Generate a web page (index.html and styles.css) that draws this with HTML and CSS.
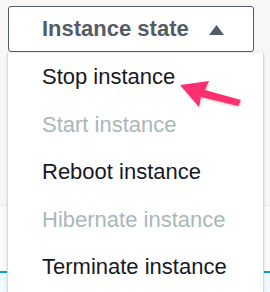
FILE: index.html
```html
<!DOCTYPE html>
<html lang="en">
<head>
<meta charset="UTF-8" />
<title>Instance state</title>
<link rel="stylesheet" href="styles.css">
</head>
<body>

<div class="page">
  <div class="toolbar">
    <button class="state-btn">
      <span>Instance state</span>
      <svg class="caret" width="15" height="10" viewBox="0 0 15 10"><polygon points="7.5,0 15,10 0,10" fill="#545b64"/></svg>
    </button>
  </div>

  <!-- table rows behind the dropdown -->
  <div class="rows">
    <div class="row"></div>
    <div class="row"></div>
    <div class="row selected"></div>
  </div>

  <ul class="menu">
    <li class="menu-item">Stop instance</li>
    <li class="menu-item disabled">Start instance</li>
    <li class="menu-item">Reboot instance</li>
    <li class="menu-item disabled">Hibernate instance</li>
    <li class="menu-item">Terminate instance</li>
  </ul>

  <svg class="pointer" width="68" height="32" viewBox="0 0 68 32">
    <polygon points="4,7 33,3 29,12 65,22 62,28 25,19 23,29" fill="#fe2f6e"/>
  </svg>
</div>

</body>
</html>
```

FILE: styles.css
```css
body {
  margin:0; background:#f7f7f7;
  font-family:'Liberation Sans', Arial, sans-serif;
  overflow:hidden;
}

.page {
  position:relative;
  height:292px;
  overflow:hidden;
}

.toolbar {
  padding:6px 16px 0 8px;
}
.state-btn {
  display:flex; align-items:center; gap:19px;
  width:246px; height:46px; box-sizing:border-box;
  padding:0 0 0 33px;
  background:#fff; border:1px solid #545b64; border-radius:3px;
  font-family:'Liberation Sans', Arial, sans-serif;
  font-size:22px; font-weight:700; color:#545b64;
}
.caret { margin-top:1px; margin-left:1px; }

/* rows of the table under the menu */
.rows { margin-top:1px; }
.row { height:152px; border-bottom:1px solid #eaeded; background:#f7f7f7; }
.row + .row { height:65px; background:#fafafa; border-bottom:2px solid #0a9fca; }
.row.selected { height:19px; background:#f1faff; border:none; }

/* dropdown */
.menu {
  position:absolute; top:53px; left:7px;
  width:257px; height:239px; box-sizing:border-box;
  margin:0; padding:0; list-style:none;
  background:#fff;
  border-left:1px solid #d5dbdb; border-right:1px solid #d5dbdb;
  box-shadow:0 1px 3px rgba(0,0,0,0.12);
}
.menu-item {
  padding:10px 0 10px 34px;
  font-size:22px; line-height:27.5px; color:#16191f;
}
.menu-item.disabled { color:#aab7b8; }

.pointer {
  position:absolute; top:78px; left:176px;
  filter:drop-shadow(1px 2px 1px rgba(0,0,0,0.15));
}
```
